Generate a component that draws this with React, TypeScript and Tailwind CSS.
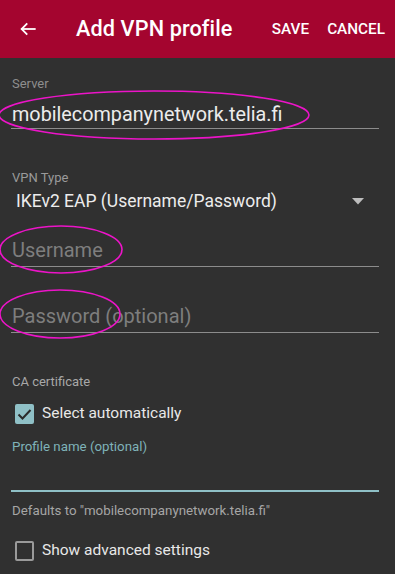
import React from "react";

function Ellipse({ cx, cy, rx, ry }: { cx: number; cy: number; rx: number; ry: number }) {
  return <ellipse cx={cx} cy={cy} rx={rx} ry={ry} fill="none" stroke="#ec14c8" strokeWidth={1.6} />;
}

export default function App() {
  return (
    <div className="relative w-[395px] h-[574px] overflow-hidden bg-[#303030]" style={{ fontFamily: "Roboto, 'Liberation Sans', sans-serif" }}>
      <div className="h-[58px] bg-[#a4052f] flex items-center text-white">
        <div className="w-[54px] flex justify-center pl-[1px]">
          <svg width="18" height="18" viewBox="0 0 24 24" fill="none" stroke="white" strokeWidth="2.4" strokeLinecap="square">
            <path d="M21 12H4" />
            <path d="M11 4.5L3.5 12L11 19.5" strokeLinecap="butt" />
          </svg>
        </div>
        <div className="ml-[22px] text-[21.7px] font-medium tracking-[0.1px] flex-1">Add VPN profile</div>
        <div className="text-[15.3px] font-medium mr-[18px]">SAVE</div>
        <div className="text-[15.3px] font-medium mr-[10px]">CANCEL</div>
      </div>

      <div className="px-[11px]">
        <div className="pt-[18px] pl-[1px] text-[13px] leading-[16px] text-[#8e8e8e]">Server</div>
        <div className="mt-[11px] pl-[1px] text-[19.8px] leading-[24px] text-[#ececec]">mobilecompanynetwork.telia.fi</div>
        <div className="mt-[1px] h-[1px] bg-[#8c8c8c] w-[368px]" />

        <div className="mt-[41px] pl-[1px] text-[13px] leading-[16px] text-[#9a9a9a]">VPN Type</div>
        <div className="mt-[4px] flex items-center h-[22px]">
          <div className="pl-[5px] text-[17.5px] leading-[22px] text-[#ececec] flex-1">IKEv2 EAP (Username/Password)</div>
          <svg width="12" height="7" viewBox="0 0 12 7" className="mr-[20px]">
            <path d="M0 0H12L6 6.5Z" fill="#bdbdbd" />
          </svg>
        </div>

        <div className="mt-[26px] pl-[1px] text-[20px] leading-[24px] text-[#7e7e7e]">Username</div>
        <div className="mt-[4px] h-[1px] bg-[#8c8c8c] w-[368px]" />

        <div className="mt-[37px] pl-[1px] text-[20px] leading-[24px] text-[#7e7e7e]">Password (optional)</div>
        <div className="mt-[4px] h-[1px] bg-[#8c8c8c] w-[368px]" />

        <div className="mt-[41px] pl-[1px] text-[13px] leading-[16px] text-[#a8a8a8]">CA certificate</div>
        <div className="mt-[12px] flex items-center h-[24px] pl-[4px]">
          <div className="w-[19px] h-[20px] rounded-[2px] bg-[#8fc0c6] flex items-center justify-center">
            <svg width="15" height="13" viewBox="0 0 15 13" fill="none" stroke="#2b2b2b" strokeWidth="2">
              <path d="M1.5 6.5L5.5 10.5L13.5 2" />
            </svg>
          </div>
          <div className="ml-[8px] text-[15.5px] text-[#e8e8e8]">Select automatically</div>
        </div>

        <div className="mt-[13px] pl-[1px] text-[13.3px] leading-[16px] text-[#7fb3b9]">Profile name (optional)</div>
        <div className="h-[35px]" />
        <div className="h-[2px] bg-[#8fc0c6] w-[368px]" />

        <div className="mt-[11px] pl-[1px] text-[13.3px] leading-[16px] text-[#a6a6a6]">Defaults to "mobilecompanynetwork.telia.fi"</div>

        <div className="mt-[20px] flex items-center h-[24px] pl-[4px]">
          <div className="w-[19px] h-[20px] rounded-[2px] border-2 border-[#9a9a9a]" />
          <div className="ml-[8px] text-[15.5px] text-[#e8e8e8]">Show advanced settings</div>
        </div>
      </div>

      <svg className="absolute left-0 top-0 pointer-events-none" width="395" height="574">
        <Ellipse cx={154} cy={115} rx={155} ry={24} />
        <Ellipse cx={61} cy={249.5} rx={61} ry={23.5} />
        <Ellipse cx={60} cy={314} rx={60} ry={24} />
      </svg>
    </div>
  );
}
